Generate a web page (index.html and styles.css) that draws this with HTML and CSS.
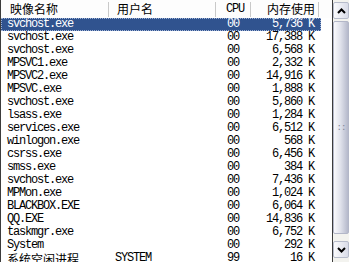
FILE: index.html
```html
<!DOCTYPE html>
<html lang="zh-CN">
<head>
  <meta charset="UTF-8">
  <meta name="viewport" content="width=device-width, initial-scale=1.0">
  <title>进程</title>
  <link rel="stylesheet" href="styles.css">
</head>
<body>
  <div class="taskwin">
    <div class="list">
      <div class="head">
        <div class="hcell name">映像名称</div>
        <div class="hcell user">用户名</div>
        <div class="hcell cpu">CPU</div>
        <div class="hcell mem">内存使用</div>
      </div>
      <div class="rows">
        <div class="row sel"><span>svchost.exe</span><span></span><span class="c">00</span><span class="m">5,736 K</span></div>
        <div class="row"><span>svchost.exe</span><span></span><span class="c">00</span><span class="m">17,388 K</span></div>
        <div class="row"><span>svchost.exe</span><span></span><span class="c">00</span><span class="m">6,568 K</span></div>
        <div class="row"><span>MPSVC1.exe</span><span></span><span class="c">00</span><span class="m">2,332 K</span></div>
        <div class="row"><span>MPSVC2.exe</span><span></span><span class="c">00</span><span class="m">14,916 K</span></div>
        <div class="row"><span>MPSVC.exe</span><span></span><span class="c">00</span><span class="m">1,888 K</span></div>
        <div class="row"><span>svchost.exe</span><span></span><span class="c">00</span><span class="m">5,860 K</span></div>
        <div class="row"><span>lsass.exe</span><span></span><span class="c">00</span><span class="m">1,284 K</span></div>
        <div class="row"><span>services.exe</span><span></span><span class="c">00</span><span class="m">6,512 K</span></div>
        <div class="row"><span>winlogon.exe</span><span></span><span class="c">00</span><span class="m">568 K</span></div>
        <div class="row"><span>csrss.exe</span><span></span><span class="c">00</span><span class="m">6,456 K</span></div>
        <div class="row"><span>smss.exe</span><span></span><span class="c">00</span><span class="m">384 K</span></div>
        <div class="row"><span>svchost.exe</span><span></span><span class="c">00</span><span class="m">7,436 K</span></div>
        <div class="row"><span>MPMon.exe</span><span></span><span class="c">00</span><span class="m">1,024 K</span></div>
        <div class="row"><span>BLACKBOX.EXE</span><span></span><span class="c">00</span><span class="m">6,064 K</span></div>
        <div class="row"><span>QQ.EXE</span><span></span><span class="c">00</span><span class="m">14,836 K</span></div>
        <div class="row"><span>taskmgr.exe</span><span></span><span class="c">00</span><span class="m">6,752 K</span></div>
        <div class="row"><span>System</span><span></span><span class="c">00</span><span class="m">292 K</span></div>
        <div class="row"><span class="zh">系统空闲进程</span><span>SYSTEM</span><span class="c">99</span><span class="m">16 K</span></div>
      </div>
    </div>
    <div class="scrollbar">
      <div class="sbtn">
        <svg width="9" height="6" viewBox="0 0 9 6"><path d="M1 5 L4.5 1.5 L8 5" fill="none" stroke="#000" stroke-width="2"/></svg>
      </div>
      <div class="track">
        <div class="thumb"><span class="grip">::</span></div>
      </div>
      <div class="sbtn">
        <svg width="9" height="6" viewBox="0 0 9 6"><path d="M1 1 L4.5 4.5 L8 1" fill="none" stroke="#000" stroke-width="2"/></svg>
      </div>
    </div>
  </div>
</body>
</html>
```

FILE: styles.css
```css
body {
  margin: 0;
  background: #ffffff;
  width: 349px;
  height: 262px;
  overflow: hidden;
}

.taskwin {
  display: flex;
  height: 262px;
  background: #ffffff;
}

.list {
  width: 332px;
  border-left: 1px solid #3c3c3c;
  border-right: 1px solid #3c3c3c;
  display: flex;
  flex-direction: column;
  overflow: hidden;
}

.head {
  display: grid;
  grid-template-columns: 107px 107px 35px 71px 1fr;
  height: 21px;
  font-family: "Noto Sans CJK SC", sans-serif;
  font-size: 12px;
  color: #000;
  background: #fdfdfd;
}
.hcell {
  position: relative;
  line-height: 18px;
  white-space: nowrap;
}
.hcell.name{ padding-left: 9px; }
.hcell.user{ padding-left: 9px; }
.hcell.cpu{
  text-align: right;
  padding-right: 6px;
  font-family: "Liberation Mono", "Courier New", monospace;
  font-size: 12px;
  letter-spacing: -1.2px;
}
.hcell.mem{ text-align: right; padding-right: 6px; }
.hcell.user::before,
.hcell.cpu::before,
.hcell.mem::before,
.hcell.mem::after {
  content: "";
  position: absolute;
  top: 2px;
  height: 15px;
  width: 1px;
  background: #c9c9c9;
}
.hcell.user::before,
.hcell.cpu::before,
.hcell.mem::before{ left: 0; }
.hcell.mem::after{ right: 2px; }

.rows {
  display: flex;
  flex-direction: column;
}
.row {
  display: grid;
  grid-template-columns: 107px 107px 35px 71px;
  width: 320px;
  height: 13px;
  flex-shrink: 0;
  line-height: 13px;
  font-family: "Liberation Mono", "Courier New", monospace;
  font-size: 12px;
  letter-spacing: -1.2px;
  color: #000;
  white-space: nowrap;
  overflow: hidden;
}
.row span:first-child{ padding-left: 6px; }
.row span:nth-child(2){ padding-left: 7px; }
.row .c{ padding-left: 12px; }
.row .m{ text-align: right; padding-right: 7px; }
.row .zh{
  font-family: "Noto Sans CJK SC", sans-serif;
  font-size: 12px;
  line-height: 13px;
  letter-spacing: 0;
}
.row.sel {
  background: #30538f;
  color: #ffffff;
  outline: 1px dotted #9fb2d6;
  outline-offset: -1px;
}

.scrollbar {
  width: 16px;
  display: flex;
  flex-direction: column;
  padding-top: 2px;
  background: #f3f3ef;
}
.sbtn {
  height: 15px;
  border: 1px solid #b7bccb;
  border-radius: 2px;
  background: linear-gradient(90deg, #fbfbfd, #d9dce8);
  display: flex;
  align-items: center;
  justify-content: center;
}
.track {
  flex: 1;
  padding: 2px 0 7px;
  display: flex;
}
.thumb {
  flex: 1;
  border: 1px solid #b3b7c8;
  border-radius: 2px;
  background: linear-gradient(90deg, #fafafd 0%, #e1e3ec 45%, #b5b9cb 100%);
  display: flex;
  align-items: center;
  justify-content: center;
}
.grip {
  font-family: "Liberation Mono", monospace;
  font-size: 9px;
  color: #7d8296;
  letter-spacing: -1px;
}
.scrollbar .sbtn:last-child{ margin-bottom: 4px; }
```
